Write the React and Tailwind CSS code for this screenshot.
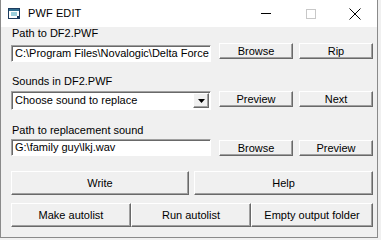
import { useState } from 'react'

const font = { fontFamily: '"Liberation Sans", Arial, sans-serif' }

// raised classic 3D button
const Btn = ({ children, className = '' }) => (
  <button
    className={`flex items-center justify-center bg-[#f0f0f0] text-[11px] leading-none text-black border border-t-white border-l-white border-r-[#696969] border-b-[#696969] shadow-[inset_-1px_-1px_0_#a0a0a0] ${className}`}
  >
    {children}
  </button>
)

// sunken text field
const Field = ({ value }) => (
  <div className="w-[200px] h-[17px] flex items-center bg-white border border-t-[#a0a0a0] border-l-[#a0a0a0] border-r-white border-b-white shadow-[inset_1px_1px_0_#696969] pl-[3px] text-[11px] leading-none text-black whitespace-nowrap overflow-hidden">
    {value}
  </div>
)

const Label = ({ children }) => (
  <div className="h-[13px] pl-[1px] text-[11px] leading-[13px] text-black">{children}</div>
)

export default function App() {
  const [sound] = useState('Choose sound to replace')

  return (
    <div className="w-[381px] h-[240px] bg-[#f0f0f0] overflow-hidden" style={font}>
      <div className="w-[378px] h-[238px] flex flex-col border-l border-r border-b border-[#8a8a8a]">
        {/* Title bar */}
        <div className="h-[27px] bg-white flex items-center shrink-0">
          <svg width="13" height="12" viewBox="0 0 13 12" className="ml-[7px] mt-[1px]">
            <rect x="0.5" y="0.5" width="11" height="10" fill="#fff" stroke="#1d3c5e" />
            <rect x="1" y="1" width="10" height="2" fill="#2f6d8f" />
            <path d="M3 5h6M3 7h6" stroke="#3aa0b8" />
            <rect x="9" y="8" width="3" height="3" fill="#1d3c5e" />
          </svg>
          <span className="ml-[7px] text-[11px] text-black tracking-[0.1px]">PWF EDIT</span>
          <div className="ml-auto flex items-center h-full">
            <div className="w-[45px] h-full flex items-center justify-center">
              <div className="w-[10px] h-px bg-black" />
            </div>
            <div className="w-[45px] h-full flex items-center justify-center">
              <div className="w-[10px] h-[10px] border border-[#c8c8c8]" />
            </div>
            <div className="w-[44px] h-full flex items-center justify-center">
              <svg width="12" height="12" viewBox="0 0 12 12">
                <path d="M0.5 0.5L11.5 11.5M11.5 0.5L0.5 11.5" stroke="#000" strokeWidth="1" />
              </svg>
            </div>
          </div>
        </div>

        {/* Client area */}
        <div className="flex-1 bg-[#f0f0f0] pl-[10px]">
          <Label>Path to DF2.PWF</Label>
          <div className="flex items-start mt-[3px]">
            <div className="mt-[2px]">
              <Field value="C:\Program Files\Novalogic\Delta Force" />
            </div>
            <Btn className="w-[74px] h-[16px] ml-[8px]">Browse</Btn>
            <Btn className="w-[74px] h-[16px] ml-[6px]">Rip</Btn>
          </div>

          <div className="mt-[13px]">
            <Label>Sounds in DF2.PWF</Label>
          </div>
          <div className="flex items-start mt-[3px]">
            <div className="w-[200px] h-[19px] flex items-center bg-white border border-t-[#a0a0a0] border-l-[#a0a0a0] border-r-white border-b-white shadow-[inset_1px_1px_0_#696969]">
              <span className="flex-1 pl-[3px] text-[11px] leading-none text-black whitespace-nowrap">{sound}</span>
              <div className="w-[16px] h-[15px] mr-[1px] flex items-center justify-center bg-[#f0f0f0] border border-t-white border-l-white border-r-[#696969] border-b-[#696969] shadow-[inset_-1px_-1px_0_#a0a0a0]">
                <svg width="7" height="4" viewBox="0 0 7 4">
                  <path d="M0 0h7L3.5 4z" fill="#000" />
                </svg>
              </div>
            </div>
            <Btn className="w-[74px] h-[16px] ml-[8px]">Preview</Btn>
            <Btn className="w-[74px] h-[16px] ml-[6px]">Next</Btn>
          </div>

          <div className="mt-[14px]">
            <Label>Path to replacement sound</Label>
          </div>
          <div className="flex items-start mt-[1px]">
            <div className="mt-[1px]">
              <Field value="G:\family guy\lkj.wav" />
            </div>
            <Btn className="w-[74px] h-[16px] ml-[8px] mt-[2px]">Browse</Btn>
            <Btn className="w-[74px] h-[16px] ml-[6px] mt-[2px]">Preview</Btn>
          </div>

          <div className="flex mt-[15px]">
            <Btn className="w-[178px] h-[24px]">Write</Btn>
            <Btn className="w-[179px] h-[24px] ml-[5px]">Help</Btn>
          </div>

          <div className="flex mt-[8px]">
            <Btn className="w-[120px] h-[24px]">Make autolist</Btn>
            <Btn className="w-[120px] h-[24px]">Run autolist</Btn>
            <Btn className="w-[122px] h-[24px]">Empty output folder</Btn>
          </div>
        </div>
      </div>
    </div>
  )
}
